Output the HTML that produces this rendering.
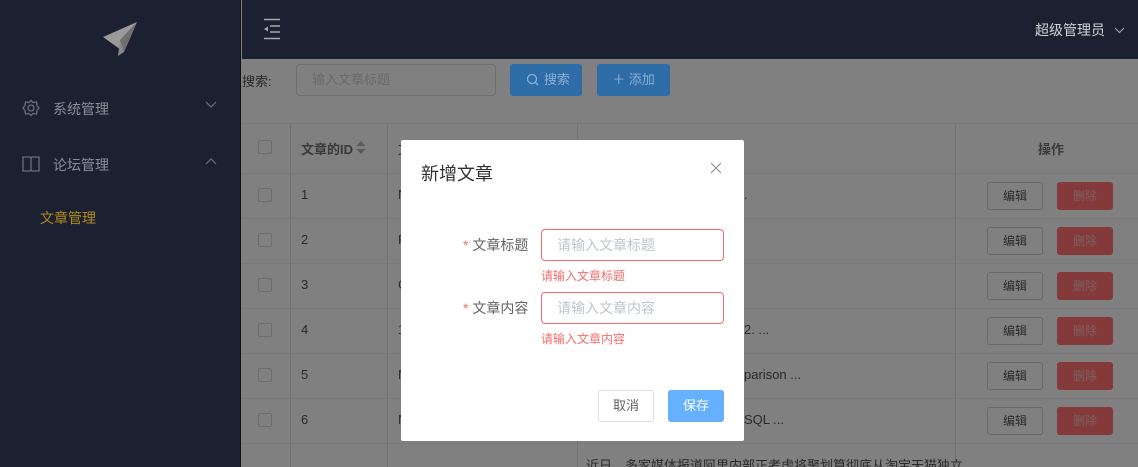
<!DOCTYPE html>
<html><head><meta charset="utf-8"><style>
*{box-sizing:border-box;margin:0;padding:0}
html,body{width:1138px;height:467px;overflow:hidden}
body{position:relative;background:#808080;font-family:"Liberation Sans","Noto Sans CJK SC",sans-serif;font-size:13px;color:#333}
.a{position:absolute}
.side{left:0;top:0;width:241px;height:467px;background:#1c2131;border-right:1px solid #111}
.head{left:242px;top:0;width:896px;height:59px;background:#1c2131}
.menu{color:#8a8e98;font-size:14px}
.hl{background:#7a7a7a}
.vl{background:#737373;width:1px}
.cb{width:14px;height:14px;border:1px solid #6e6e6e;border-radius:2px}
.td{color:#2a2a2a;font-size:13px}
.ed{width:56px;height:28px;border:1px solid #6a6a6a;border-radius:3px;color:#2a2a2a;font-size:12px;text-align:center;line-height:26px}
.dl{width:56px;height:28px;background:#843a3a;border-radius:3px;color:#7d6060;font-size:12px;text-align:center;line-height:28px}
.modal{left:401px;top:140px;width:343px;height:301px;background:#fff;border-radius:2px}
.inp{width:183px;height:32px;border:1px solid #f56c6c;border-radius:4px;color:#c0c4cc;font-size:14px;line-height:30px;padding-left:15px}
.err{color:#f56c6c;font-size:12px}
.lab{font-size:14px;color:#606266}
</style></head><body>
<div class="a side"></div>
<svg class="a" style="left:100px;top:20px" width="40" height="38" viewBox="0 0 40 38"><path d="M3 17 L37 2 L24 32 Z" fill="#9a9a9a"/><path d="M37 2 L20 20 L24 32 Z" fill="#6e6e6e"/><path d="M20 20 L18 36 L24 32 Z" fill="#888"/></svg>
<svg class="a" style="left:22px;top:99px" width="18" height="18" viewBox="0 0 18 18"><circle cx="9" cy="9" r="3" fill="none" stroke="#6a6e78" stroke-width="1.3"/><path d="M9 1.5 L11 3.5 L14.5 3 L15 6.5 L17 9 L15 11.5 L14.5 15 L11 14.5 L9 16.5 L7 14.5 L3.5 15 L3 11.5 L1 9 L3 6.5 L3.5 3 L7 3.5 Z" fill="none" stroke="#6a6e78" stroke-width="1.3"/></svg>
<div class="a menu" style="left:53px;top:99px">系统管理</div>
<svg class="a" style="left:205px;top:101px" width="12" height="8"><path d="M1 1 L6 6 L11 1" fill="none" stroke="#6a6e78" stroke-width="1.2"/></svg>
<svg class="a" style="left:22px;top:156px" width="18" height="16"><path d="M1 1 H8 L9 2 L10 1 H17 V15 H10 L9 14 L8 15 H1 Z M9 2 V14" fill="none" stroke="#6a6e78" stroke-width="1.3"/></svg>
<div class="a menu" style="left:53px;top:155px">论坛管理</div>
<svg class="a" style="left:205px;top:158px" width="12" height="8"><path d="M1 6 L6 1 L11 6" fill="none" stroke="#6a6e78" stroke-width="1.2"/></svg>
<div class="a" style="left:40px;top:208px;color:#b08a1c;font-size:14px">文章管理</div>
<div class="a head"></div>
<svg class="a" style="left:262px;top:18px" width="20" height="22"><path d="M2 1.5 H18 M8 8 H18 M8 14 H18 M2 20.5 H18" stroke="#a6a8ae" stroke-width="1.6"/><path d="M2 11 L6 8.5 V13.5 Z" fill="#a6a8ae"/></svg>
<div class="a" style="left:1035px;top:20px;color:#d0d2d6;font-size:14px">超级管理员</div>
<svg class="a" style="left:1114px;top:27px" width="11" height="7"><path d="M1 1 L5.5 5.5 L10 1" fill="none" stroke="#9a9ea6" stroke-width="1.2"/></svg>
<div class="a" style="left:242px;top:71px;color:#2a2a2a;font-size:13px">搜索:</div>
<div class="a" style="left:296px;top:64px;width:200px;height:32px;border:1px solid #6e6e6e;border-radius:4px;color:#6a6a6a;line-height:30px;padding-left:15px">输入文章标题</div>
<div class="a" style="left:510px;top:64px;width:72px;height:32px;background:#2e6ca8;border-radius:3px;color:#8ab0d4;line-height:32px;padding-left:34px">搜索</div>
<svg class="a" style="left:526px;top:73px" width="13" height="13"><circle cx="6" cy="6" r="4.5" fill="none" stroke="#8ab0d4" stroke-width="1.3"/><path d="M9.3 9.3 L12 12" stroke="#8ab0d4" stroke-width="1.3"/></svg>
<div class="a" style="left:597px;top:64px;width:73px;height:32px;background:#2e6ca8;border-radius:3px;color:#8ab0d4;line-height:32px;text-align:center">＋ 添加</div>
<div class="a hl" style="left:242px;top:123px;width:896px;height:1px"></div>
<div class="a hl" style="left:242px;top:173px;width:896px;height:1px"></div>
<div class="a hl" style="left:242px;top:218px;width:896px;height:1px"></div>
<div class="a hl" style="left:242px;top:263px;width:896px;height:1px"></div>
<div class="a hl" style="left:242px;top:308px;width:896px;height:1px"></div>
<div class="a hl" style="left:242px;top:353px;width:896px;height:1px"></div>
<div class="a hl" style="left:242px;top:398px;width:896px;height:1px"></div>
<div class="a hl" style="left:242px;top:443px;width:896px;height:1px"></div>
<div class="a vl" style="left:290px;top:123px;height:344px"></div>
<div class="a vl" style="left:387px;top:123px;height:344px"></div>
<div class="a vl" style="left:577px;top:123px;height:344px"></div>
<div class="a vl" style="left:955px;top:123px;height:344px"></div>
<div class="a cb" style="left:258px;top:140px"></div>
<div class="a td" style="left:301px;top:139px;font-weight:bold;color:#3a3a3a">文章的ID</div>
<svg class="a" style="left:356px;top:141px" width="10" height="13"><path d="M5 0 L9.5 5 H0.5 Z M5 13 L9.5 8 H0.5 Z" fill="#5a5a5a"/></svg>
<div class="a td" style="left:398px;top:139px">文</div>
<div class="a td" style="left:1038px;top:139px;font-weight:bold;color:#3a3a3a">操作</div>

<div class="a cb" style="left:258px;top:188px"></div><div class="a td" style="left:301px;top:187px">1</div><div class="a td" style="left:398px;top:187px">N</div><div class="a td" style="left:744px;top:187px">.</div>
<div class="a cb" style="left:258px;top:233px"></div><div class="a td" style="left:301px;top:232px">2</div><div class="a td" style="left:398px;top:232px">F</div>
<div class="a cb" style="left:258px;top:278px"></div><div class="a td" style="left:301px;top:277px">3</div><div class="a td" style="left:398px;top:277px">C</div>
<div class="a cb" style="left:258px;top:323px"></div><div class="a td" style="left:301px;top:322px">4</div><div class="a td" style="left:398px;top:322px">1</div><div class="a td" style="left:744px;top:322px">2. ...</div>
<div class="a cb" style="left:258px;top:368px"></div><div class="a td" style="left:301px;top:367px">5</div><div class="a td" style="left:398px;top:367px">N</div><div class="a td" style="left:744px;top:367px">parison ...</div>
<div class="a cb" style="left:258px;top:413px"></div><div class="a td" style="left:301px;top:412px">6</div><div class="a td" style="left:398px;top:412px">N</div><div class="a td" style="left:744px;top:412px">SQL ...</div>
<div class="a td" style="left:586px;top:455px">近日，多家媒体报道阿里内部正考虑将聚划算彻底从淘宝天猫独立</div>

<div class="a ed" style="left:987px;top:182px">编辑</div><div class="a dl" style="left:1057px;top:182px">删除</div>
<div class="a ed" style="left:987px;top:227px">编辑</div><div class="a dl" style="left:1057px;top:227px">删除</div>
<div class="a ed" style="left:987px;top:272px">编辑</div><div class="a dl" style="left:1057px;top:272px">删除</div>
<div class="a ed" style="left:987px;top:317px">编辑</div><div class="a dl" style="left:1057px;top:317px">删除</div>
<div class="a ed" style="left:987px;top:362px">编辑</div><div class="a dl" style="left:1057px;top:362px">删除</div>
<div class="a ed" style="left:987px;top:407px">编辑</div><div class="a dl" style="left:1057px;top:407px">删除</div>

<div class="a modal"></div>
<div class="a" style="left:421px;top:160px;font-size:18px;color:#303133">新增文章</div>
<svg class="a" style="left:710px;top:162px" width="12" height="12"><path d="M1 1 L11 11 M11 1 L1 11" stroke="#909399" stroke-width="1.2"/></svg>
<div class="a lab" style="left:463px;top:235px"><span style="color:#f56c6c">*</span> 文章标题</div>
<div class="a inp" style="left:541px;top:229px">请输入文章标题</div>
<div class="a err" style="left:541px;top:267px">请输入文章标题</div>
<div class="a lab" style="left:463px;top:298px"><span style="color:#f56c6c">*</span> 文章内容</div>
<div class="a inp" style="left:541px;top:292px">请输入文章内容</div>
<div class="a err" style="left:541px;top:330px">请输入文章内容</div>
<div class="a" style="left:598px;top:390px;width:56px;height:32px;border:1px solid #dcdfe6;border-radius:3px;text-align:center;line-height:30px;color:#606266">取消</div>
<div class="a" style="left:668px;top:390px;width:56px;height:32px;background:#66b1ff;border-radius:3px;text-align:center;line-height:32px;color:#fff">保存</div>
</body></html>
